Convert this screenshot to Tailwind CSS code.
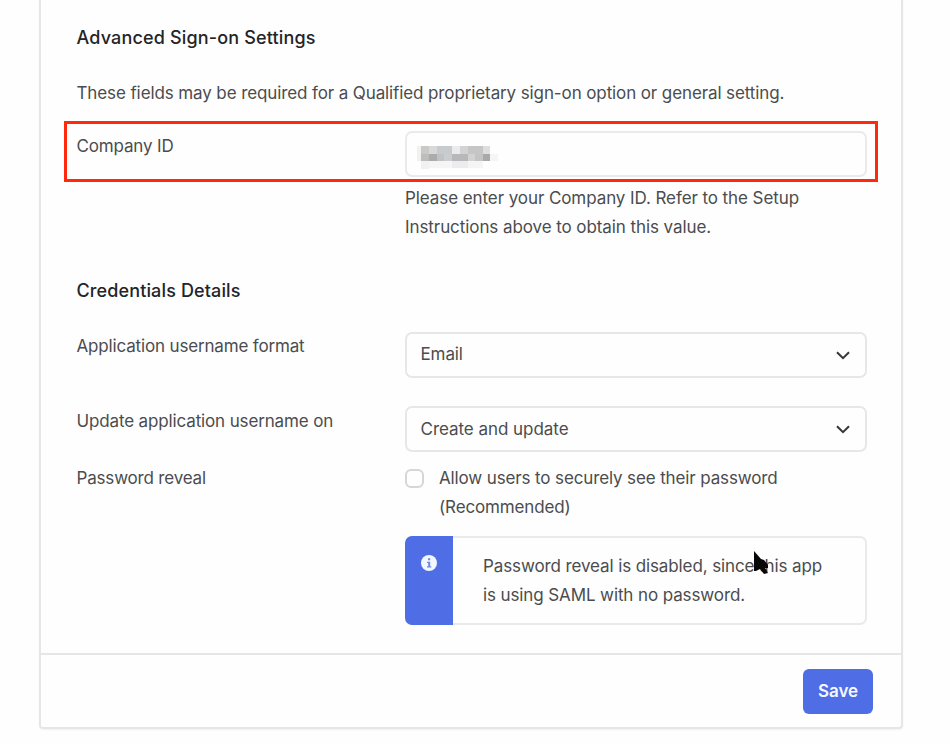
<!DOCTYPE html>
<html lang="en">
<head>
    <meta charset="UTF-8">
    <meta name="viewport" content="width=device-width, initial-scale=1.0">
    <title>Sign-on Settings</title>
    <script src="https://cdn.jsdelivr.net/npm/@tailwindcss/browser@4"></script>
</head>
<body class="h-[744px] overflow-hidden bg-[#fdfefd] font-['Inter',sans-serif] text-[17px] leading-[29px] tracking-[-0.11px] text-[#4b4c4f]">
    <main class="relative ml-[39px] w-[864px] h-[729px] flex flex-col border-2 border-t-0 border-[#e6e6e6] rounded-b-[4px] shadow-xs">
        <form class="flex-1 pl-[35.5px] pr-[34px] pt-[23px]">
            <h2 class="text-[18px] font-medium tracking-[0.16px] text-[#232428]">Advanced Sign-on Settings</h2>
            <p class="mt-[27px] whitespace-nowrap">These fields may be required for a Qualified proprietary sign-on option or general setting.</p>

            <!-- Highlighted field -->
            <div class="-ml-[12.5px] -mr-[11px] mt-[13px] h-[61px] flex justify-between border-[3px] border-[#fd2a0c] pl-[9.5px] pr-2 pt-[7px]">
                <label for="company" class="pt-px tracking-[-0.15px]">Company ID</label>
                <div id="company" class="w-[462px] h-[46px] rounded-[7px] border-2 border-[#e9eae9] pl-[10px] pt-[13px]">
                    <svg width="82" height="23" viewBox="0 0 82 23" shape-rendering="crispEdges">
                        <path fill="#f1f1f1" d="M0 0h4v15H0zM4 15h8v8H4z"/>
                        <path fill="#c9cac8" d="M4 0h8v8H4z"/>
                        <path fill="#d8d8d8" d="M12 0h8v8h-8z"/>
                        <path fill="#c6cbce" d="M20 0h15v8H20z"/>
                        <path fill="#ebebed" d="M35 0h8v8h-8z"/>
                        <path fill="#d3d3d3" d="M43 0h8v8h-8z"/>
                        <path fill="#c6c6c6" d="M51 0h15v8H51z"/>
                        <path fill="#dedede" d="M66 0h7v8h-7z"/>
                        <path fill="#bdbdbb" d="M4 8h8v7H4z"/>
                        <path fill="#aaabad" d="M12 8h8v7h-8z"/>
                        <path fill="#bfc3c5" d="M20 8h7v7h-7z"/>
                        <path fill="#cbcccc" d="M27 8h8v7h-8z"/>
                        <path fill="#b8b8ba" d="M35 8h16v7H35z"/>
                        <path fill="#d2d2d2" d="M51 8h7v7h-7z"/>
                        <path fill="#c4c4c4" d="M58 8h8v7h-8z"/>
                        <path fill="#aaa9a9" d="M66 8h7v7h-7z"/>
                        <path fill="#f5f5f6" d="M73 8h8v7h-8zM12 15h23v7H12zM51 15h15v7H51z"/>
                        <path fill="#ececee" d="M35 15h16v7H35z"/>
                    </svg>
                </div>
            </div>
            <p class="ml-[328.5px] mt-[2px] tracking-[-0.08px]">Please enter your Company ID. Refer to the Setup<br>Instructions above to obtain this value.</p>

            <h2 class="mt-[34px] text-[18px] font-medium tracking-[0.13px] text-[#232428]">Credentials Details</h2>
            <div class="mt-[27px] flex justify-between">
                <label class="tracking-[-0.16px]">Application username format</label>
                <div class="w-[462px] h-[46px] flex items-center justify-between rounded-[7px] border-2 border-[#e6e7e8] pl-[13.5px] pr-[15px]">
                    <span class="pb-[2px]">Email</span>
                    <svg width="14" height="9" viewBox="0 0 14 9" fill="none" stroke="#353638" stroke-width="2"><path d="M1 1.2l6 6 6-6"/></svg>
                </div>
            </div>
            <div class="mt-[28px] flex justify-between">
                <label class="pt-px tracking-[-0.14px]">Update application username on</label>
                <div class="w-[462px] h-[46px] flex items-center justify-between rounded-[7px] border-2 border-[#e6e7e8] pl-[13.5px] pr-[15px]">
                    <span class="tracking-[-0.04px]">Create and update</span>
                    <svg width="14" height="9" viewBox="0 0 14 9" fill="none" stroke="#353638" stroke-width="2"><path d="M1 1.2l6 6 6-6"/></svg>
                </div>
            </div>
            <div class="mt-3 flex justify-between">
                <span class="tracking-[-0.18px]">Password reveal</span>
                <div class="w-[462px] flex gap-[15px]">
                    <i class="mt-[5px] size-[19px] shrink-0 rounded-[6px] border-2 border-[#d6d6d6]"></i>
                    <label class="tracking-[-0.13px]">Allow users to securely see their password<br>(Recommended)</label>
                </div>
            </div>
            <div class="ml-[328.5px] mt-[14px] w-[462px] h-[89px] flex">
                <div class="w-12 shrink-0 rounded-l-[7px] bg-[#4f6de4] pl-4 pt-[19px]">
                    <svg width="16" height="16" viewBox="0 0 16 16"><circle cx="8" cy="8" r="8" fill="#f1f8ff"/><path fill="#6d88e8" d="M7 3.2h2.2v2H7zM6 6.8h3.2v4.4h1.1v1.3H6v-1.3h1.2V8.1H6z"/></svg>
                </div>
                <p class="flex-1 rounded-r-[7px] border-2 border-l-0 border-[#e9eae9] pl-[30px] pt-[14px] whitespace-nowrap">Password reveal is disabled, since this app<br>is using SAML with no password.</p>
            </div>
        </form>
        <footer class="h-[74px] flex justify-end border-t-2 border-[#e6e6e6] pr-7 pt-[14px]">
            <button class="w-[70px] h-[45px] rounded-[6px] bg-[#4f6de4] font-semibold text-[#f5f8ff]">Save</button>
        </footer>

        <!-- Mouse pointer -->
        <svg class="absolute left-[713px] top-[551px]" width="16" height="23" viewBox="0 0 16 23"><path fill="#080808" d="M0 0l7 8 3 1 4 5v3h-3l3 5-4 1-4-5-4 2H0z"/></svg>
    </main>
</body>
</html>
